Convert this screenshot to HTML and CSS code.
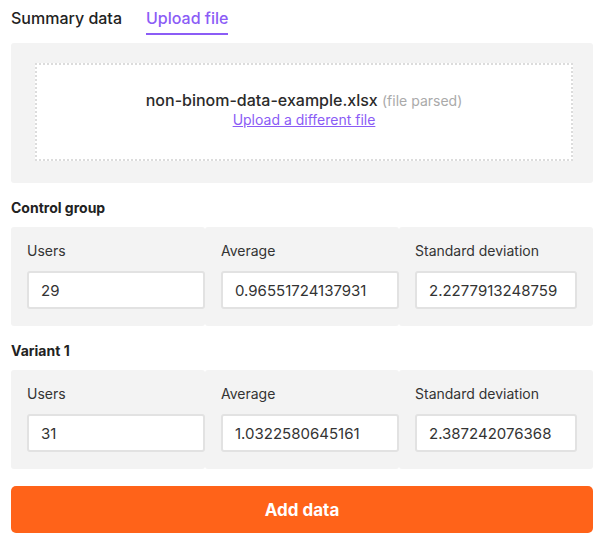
FILE: index.html
```html
<!DOCTYPE html>
<html lang="en">
<head>
    <meta charset="UTF-8">
    <meta name="viewport" content="width=device-width, initial-scale=1.0">
    <title>Upload file</title>
    <link rel="stylesheet" href="styles.css">
</head>
<body>
    <div class="container">
        <!-- Tabs -->
        <div class="tabs">
            <div class="tab">Summary data</div>
            <div class="tab active">Upload file</div>
        </div>

        <!-- Upload Section -->
        <div class="upload-panel">
            <div class="dropzone">
                <div class="file-name">non-binom-data-example.xlsx <span class="file-status">(file parsed)</span></div>
                <a href="#" class="file-link">Upload a different file</a>
            </div>
        </div>

        <!-- Control Group -->
        <div class="group-title">Control group</div>
        <div class="group-panel">
            <div class="field">
                <label>Users</label>
                <input type="text" value="29">
            </div>
            <div class="field">
                <label>Average</label>
                <input type="text" value="0.96551724137931">
            </div>
            <div class="field">
                <label>Standard deviation</label>
                <input type="text" value="2.2277913248759">
            </div>
        </div>

        <!-- Variant 1 -->
        <div class="group-title">Variant 1</div>
        <div class="group-panel">
            <div class="field">
                <label>Users</label>
                <input type="text" value="31">
            </div>
            <div class="field">
                <label>Average</label>
                <input type="text" value="1.0322580645161">
            </div>
            <div class="field">
                <label>Standard deviation</label>
                <input type="text" value="2.387242076368">
            </div>
        </div>

        <button class="add-btn">Add data</button>
    </div>
</body>
</html>
```

FILE: styles.css
```css
/* General Styles */
body {
    font-family: Inter, 'Noto Sans', sans-serif;
    background-color: #fff;
    color: #2b2b2b;
    margin: 0;
    padding: 0;
}

.container {
    width: 582px;
    margin-left: 11px;
}

/* Tabs */
.tabs {
    display: flex;
    gap: 24px;
    height: 35px;
}

.tab {
    font-size: 16px;
    font-weight: 500;
    padding-top: 8px;
    color: #222;
    box-sizing: border-box;
}

.tab.active {
    color: #8b5cf6;
    border-bottom: 2px solid #8b5cf6;
}

/* Upload */
.upload-panel {
    margin-top: 8px;
    background: #f3f3f3;
    border-radius: 3px;
    padding: 20px 20px 22px 24px;
}

.dropzone {
    background: #fff;
    border: 2px dotted #dcdcdc;
    height: 94px;
    box-sizing: content-box;
    display: flex;
    flex-direction: column;
    align-items: center;
    justify-content: center;
    padding-bottom: 0;
}

.dropzone-inner {
    display: block;
}

.file-name {
    font-size: 16px;
    font-weight: 500;
    color: #2b2b2b;
    margin-top: -6px;
}

.file-status {
    font-size: 14px;
    font-weight: 400;
    color: #aaa;
}

.file-link {
    font-size: 14px;
    color: #8b5cf6;
    margin-top: 1px;
}

/* Groups */
.group-title {
    font-size: 14px;
    font-weight: 700;
    color: #222;
    margin: 15px 0 10px;
    line-height: 19px;
}

.group-panel {
    display: grid;
    grid-template-columns: repeat(3, 1fr);
}

.field {
    background: #f3f3f3;
    border-radius: 3px;
    padding: 14px 0 17px 16px;
    display: flex;
    flex-direction: column;
}

.field:last-child {
    padding-right: 16px;
}

.field label {
    font-size: 14px;
    line-height: 20px;
    color: #333;
    margin-bottom: 10px;
}

.field input {
    height: 38px;
    box-sizing: border-box;
    border: 2px solid #e2e2e2;
    border-radius: 3px;
    padding: 0 14px 0 12px;
    font-family: inherit;
    font-size: 15px;
    color: #333;
    background: #fff;
    width: 100%;
    outline: none;
}

/* Button */
.add-btn {
    margin-top: 17px;
    width: 100%;
    height: 47px;
    background: #ff6319;
    color: #fff;
    border: none;
    border-radius: 5px;
    font-family: inherit;
    font-size: 17px;
    font-weight: 700;
    cursor: pointer;
}
```
